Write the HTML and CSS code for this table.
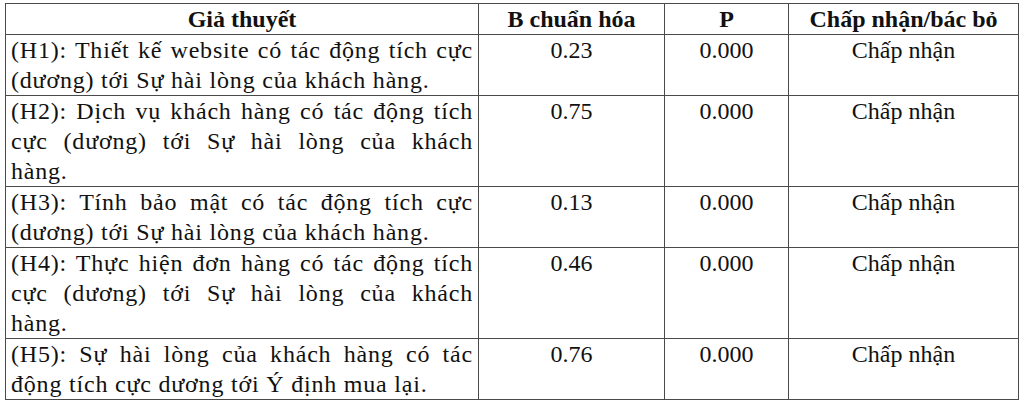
FILE: index.html
```html
<!DOCTYPE html>
<html lang="vi">
<head>
<meta charset="utf-8">
<link rel="stylesheet" href="styles.css">
</head>
<body>
<table class="results">
  <colgroup>
    <col class="c-hyp">
    <col class="c-b">
    <col class="c-p">
    <col class="c-dec">
  </colgroup>
  <thead>
    <tr>
      <th>Giả thuyết</th>
      <th>B chuẩn hóa</th>
      <th>P</th>
      <th>Chấp nhận/bác bỏ</th>
    </tr>
  </thead>
  <tbody>
    <tr>
      <td class="hyp">(H1): Thiết kế website có tác động tích cực (dương) tới Sự hài lòng của khách hàng.</td>
      <td>0.23</td>
      <td>0.000</td>
      <td>Chấp nhận</td>
    </tr>
    <tr>
      <td class="hyp">(H2): Dịch vụ khách hàng có tác động tích cực (dương) tới Sự hài lòng của khách hàng.</td>
      <td>0.75</td>
      <td>0.000</td>
      <td>Chấp nhận</td>
    </tr>
    <tr>
      <td class="hyp">(H3): Tính bảo mật có tác động tích cực (dương) tới Sự hài lòng của khách hàng.</td>
      <td>0.13</td>
      <td>0.000</td>
      <td>Chấp nhận</td>
    </tr>
    <tr>
      <td class="hyp">(H4): Thực hiện đơn hàng có tác động tích cực (dương) tới Sự hài lòng của khách hàng.</td>
      <td>0.46</td>
      <td>0.000</td>
      <td>Chấp nhận</td>
    </tr>
    <tr>
      <td class="hyp">(H5): Sự hài lòng của khách hàng có tác động tích cực dương tới Ý định mua lại.</td>
      <td>0.76</td>
      <td>0.000</td>
      <td>Chấp nhận</td>
    </tr>
  </tbody>
</table>
</body>
</html>
```

FILE: styles.css
```css
html, body {
  margin: 0;
  padding: 0;
  background: #ffffff;
}

body {
  padding: 3px 0 0 5px;
  font-family: "Liberation Serif", "Times New Roman", serif;
  color: #111111;
}

.results {
  border-collapse: collapse;
  table-layout: fixed;
  width: 1013px;
  font-size: 24px;
  line-height: 30px;
}

.c-hyp { width: 473px; }
.c-b { width: 186px; }
.c-p { width: 124px; }
.c-dec { width: 230px; }

.results th,
.results td {
  border: 1px solid #4a4a4a;
  padding: 0 5px;
  vertical-align: top;
  text-align: center;
}

.results th {
  font-weight: bold;
  height: 30px;
}

.results td.hyp {
  text-align: justify;
  letter-spacing: 0.8px;
}
```
